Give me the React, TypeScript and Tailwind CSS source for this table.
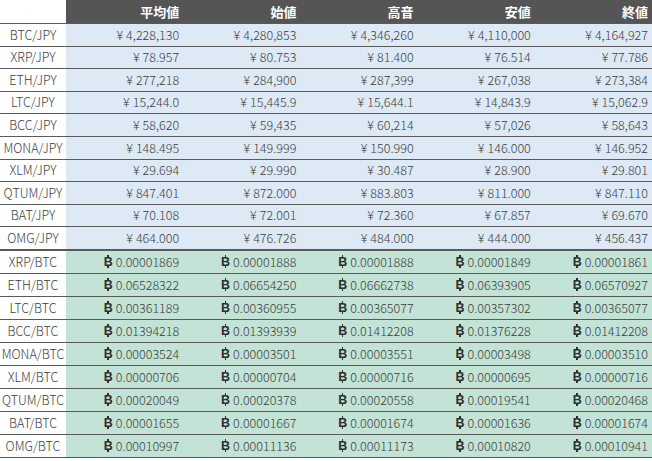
import React from 'react';

interface Row {
  pair: string;
  values: string[];
}

const jpyRows: Row[] = [
  { pair: 'BTC/JPY', values: ['4,228,130', '4,280,853', '4,346,260', '4,110,000', '4,164,927'] },
  { pair: 'XRP/JPY', values: ['78.957', '80.753', '81.400', '76.514', '77.786'] },
  { pair: 'ETH/JPY', values: ['277,218', '284,900', '287,399', '267,038', '273,384'] },
  { pair: 'LTC/JPY', values: ['15,244.0', '15,445.9', '15,644.1', '14,843.9', '15,062.9'] },
  { pair: 'BCC/JPY', values: ['58,620', '59,435', '60,214', '57,026', '58,643'] },
  { pair: 'MONA/JPY', values: ['148.495', '149.999', '150.990', '146.000', '146.952'] },
  { pair: 'XLM/JPY', values: ['29.694', '29.990', '30.487', '28.900', '29.801'] },
  { pair: 'QTUM/JPY', values: ['847.401', '872.000', '883.803', '811.000', '847.110'] },
  { pair: 'BAT/JPY', values: ['70.108', '72.001', '72.360', '67.857', '69.670'] },
  { pair: 'OMG/JPY', values: ['464.000', '476.726', '484.000', '444.000', '456.437'] },
];

const btcRows: Row[] = [
  { pair: 'XRP/BTC', values: ['0.00001869', '0.00001888', '0.00001888', '0.00001849', '0.00001861'] },
  { pair: 'ETH/BTC', values: ['0.06528322', '0.06654250', '0.06662738', '0.06393905', '0.06570927'] },
  { pair: 'LTC/BTC', values: ['0.00361189', '0.00360955', '0.00365077', '0.00357302', '0.00365077'] },
  { pair: 'BCC/BTC', values: ['0.01394218', '0.01393939', '0.01412208', '0.01376228', '0.01412208'] },
  { pair: 'MONA/BTC', values: ['0.00003524', '0.00003501', '0.00003551', '0.00003498', '0.00003510'] },
  { pair: 'XLM/BTC', values: ['0.00000706', '0.00000704', '0.00000716', '0.00000695', '0.00000716'] },
  { pair: 'QTUM/BTC', values: ['0.00020049', '0.00020378', '0.00020558', '0.00019541', '0.00020468'] },
  { pair: 'BAT/BTC', values: ['0.00001655', '0.00001667', '0.00001674', '0.00001636', '0.00001674'] },
  { pair: 'OMG/BTC', values: ['0.00010997', '0.00011136', '0.00011173', '0.00010820', '0.00010941'] },
];

const headers = ['平均値', '始値', '高音', '安値', '終値'];

// row heights (including 1px top border) so lines land where the sheet has them
const jpyHeights = ['h-[23px]', 'h-[22px]', 'h-[23px]', 'h-[22px]', 'h-[23px]', 'h-[23px]', 'h-[22px]', 'h-[23px]', 'h-[22px]', 'h-[23px]'];

const font = { fontFamily: '"Noto Sans CJK JP", "Noto Sans", sans-serif' };

// ฿ built from a bold B with stubs above and below
const BitcoinSign: React.FC = () => (
  <span
    className="relative inline-block font-bold leading-none text-[12.5px] text-[#2e2e2e] mr-[3px]"
    style={{ fontFamily: '"Liberation Sans", sans-serif' }}
  >
    B
    <span className="absolute left-[3.5px] top-[-0.5px] h-[2px] w-[1.6px] bg-[#2e2e2e]" />
    <span className="absolute left-[3.5px] top-[10.3px] h-[2px] w-[1.6px] bg-[#2e2e2e]" />
  </span>
);

const App: React.FC = () => {
  return (
    <div className="w-[652px] h-[461px] bg-white overflow-hidden text-[12.5px] font-light text-[#3c3c3c]" style={font}>
      {/* Header */}
      <div className="grid grid-cols-[66px_repeat(5,1fr)] h-[23px]">
        <div className="bg-white" />
        {headers.map((h) => (
          <div key={h} className="bg-[#555555] text-white font-bold text-[13px] text-right pr-[4px] leading-[23px]">
            {h}
          </div>
        ))}
      </div>

      {/* JPY rows */}
      {jpyRows.map((row, idx) => (
        <div
          key={row.pair}
          className={`grid grid-cols-[66px_repeat(5,1fr)] ${jpyHeights[idx]} border-t border-[#5a5a5a]`}
        >
          <div className="bg-white text-center flex items-center justify-center">{row.pair}</div>
          {row.values.map((v, i) => (
            <div key={i} className="bg-[#ddeaf6] flex items-center justify-end pr-[4px]">
              <span className="mr-[3px]">¥</span>
              {v}
            </div>
          ))}
        </div>
      ))}

      {/* BTC rows */}
      {btcRows.map((row, idx) => (
        <div
          key={row.pair}
          className={
            idx === 0
              ? 'grid grid-cols-[66px_repeat(5,1fr)] h-[24px] border-t-2 border-[#5a5a5a]'
              : 'grid grid-cols-[66px_repeat(5,1fr)] h-[23px] border-t border-[#5a5a5a]'
          }
        >
          <div className="bg-white flex items-center justify-center">{row.pair}</div>
          {row.values.map((v, i) => (
            <div key={i} className="bg-[#c2e3d5] flex items-center justify-end pr-[4px]">
              <BitcoinSign />
              {v}
            </div>
          ))}
        </div>
      ))}
      <div className="border-t border-[#5a5a5a]" />
    </div>
  );
};

export default App;
